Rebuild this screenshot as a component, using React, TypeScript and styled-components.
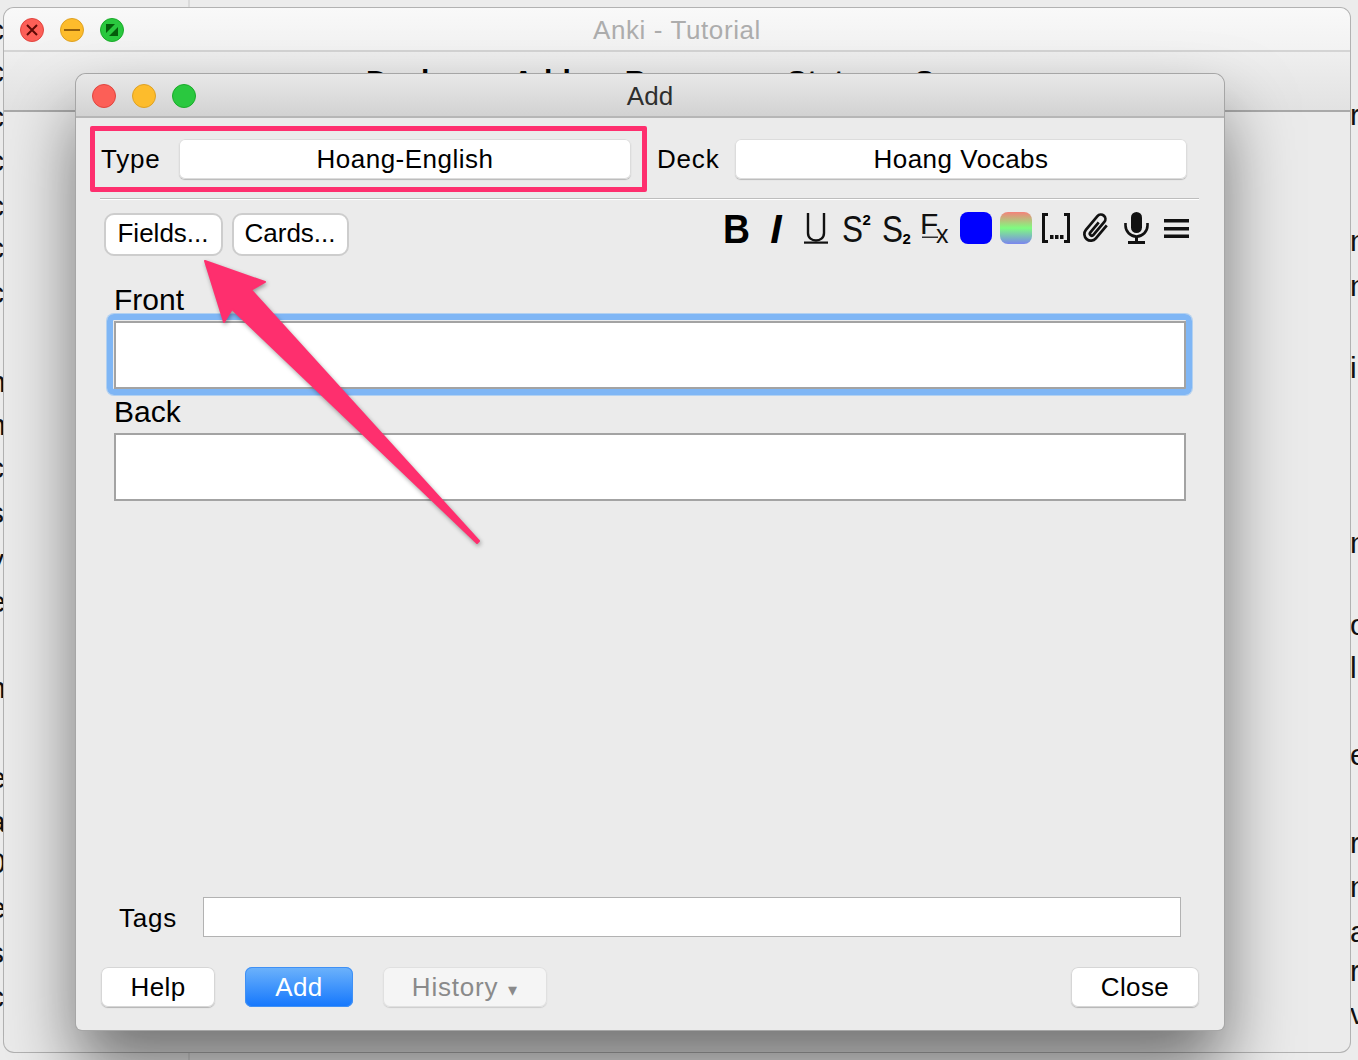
import React from "react";
import styled, { createGlobalStyle } from "styled-components";

const PINK = "#fe2f6e";

const leftLetters: [string, number][] = [
  ["c", 30], ["c", 72], ["c", 117], ["c", 161], ["c", 206], ["c", 248], ["c", 293],
  ["n", 382], ["n", 425], ["c", 468], ["s", 513], ["y", 560], ["e", 602], ["r", 645],
  ["n", 688], ["r", 733], ["e", 778], ["a", 822], ["0", 863], ["e", 908], ["s", 953],
  ["c", 997], ["l", 1043],
];

const rightLetters: [string, number][] = [
  ["r", 115], ["n", 241], ["n", 286], ["i", 368], ["n", 543], ["o", 625], ["l", 668],
  ["e", 755], ["r", 843], ["n", 887], ["a", 932], ["r", 971], ["v", 1014],
];

const menuItems = ["Decks", "Add", "Browse", "Stats", "Sync"];

const App = () => {
  return (
    <Desktop>
      <GlobalStyle />
      <BackSidebar />

      <EdgeStrip $side="left">
        {leftLetters.map(([ch, y]) => (
          <EdgeLetter key={y} $side="left" $y={y}>
            {ch}
          </EdgeLetter>
        ))}
      </EdgeStrip>
      <EdgeStrip $side="right">
        {rightLetters.map(([ch, y]) => (
          <EdgeLetter key={y} $side="right" $y={y}>
            {ch}
          </EdgeLetter>
        ))}
      </EdgeStrip>

      <MainWindow>
        <MainTitleBar>
          <Lights>
            <Light $color="#fc5f57" $edge="#e0443e">
              <svg width="14" height="14" viewBox="0 0 14 14">
                <path d="M2 2l10 10M12 2L2 12" stroke="#5e0a06" strokeWidth="2" />
              </svg>
            </Light>
            <Light $color="#fdbc2c" $edge="#dea123">
              <svg width="16" height="14" viewBox="0 0 16 14">
                <path d="M0 7h16" stroke="#935f0c" strokeWidth="2" />
              </svg>
            </Light>
            <Light $color="#2ac83f" $edge="#1aab29">
              <svg width="14" height="14" viewBox="0 0 14 14">
                <path d="M1 1h9L1 10zM13 13H4l9-9z" fill="#055c0c" />
              </svg>
            </Light>
          </Lights>
          <MainTitle>Anki - Tutorial</MainTitle>
        </MainTitleBar>
        <MenuBar>
          {menuItems.map((item) => (
            <MenuItem key={item}>{item}</MenuItem>
          ))}
        </MenuBar>
      </MainWindow>

      <Dialog>
        <DialogTitleBar>
          <Lights>
            <Light $color="#fc5f57" $edge="#e0443e" />
            <Light $color="#fdbc2c" $edge="#dea123" />
            <Light $color="#2ac83f" $edge="#1aab29" />
          </Lights>
          <DialogTitle>Add</DialogTitle>
        </DialogTitleBar>

        <ChooserRow>
          <ChooserLabel>Type</ChooserLabel>
          <Chooser>Hoang-English</Chooser>
          <ChooserLabel $indent={26}>Deck</ChooserLabel>
          <Chooser>Hoang Vocabs</Chooser>
        </ChooserRow>

        <Divider />

        <EditorBar>
          <SmallButton $width={119}>Fields...</SmallButton>
          <SmallButton $width={117}>Cards...</SmallButton>
          <Toolbar>
            <ToolIcon viewBox="0 0 32 32">
              <BoldGlyph x="3" y="31" fontSize="41" textLength="27" lengthAdjust="spacingAndGlyphs">
                B
              </BoldGlyph>
            </ToolIcon>
            <ToolIcon viewBox="0 0 32 32">
              <BoldGlyph x="16" y="31" textAnchor="middle" fontSize="41" fontStyle="italic">
                I
              </BoldGlyph>
            </ToolIcon>
            <ToolIcon viewBox="0 0 32 32">
              <path d="M8 1v20c0 10 16 10 16 0V1" fill="none" stroke="#111" strokeWidth="2.400" />
              <rect x="4" y="29.500" width="24" height="2.200" fill="#111" />
            </ToolIcon>
            <ToolIcon viewBox="0 0 32 32">
              <ThinGlyph x="2" y="30" fontSize="36" textLength="21" lengthAdjust="spacingAndGlyphs">
                S
              </ThinGlyph>
              <BoldGlyph x="22.500" y="13" fontSize="15">
                2
              </BoldGlyph>
            </ToolIcon>
            <ToolIcon viewBox="0 0 32 32">
              <ThinGlyph x="2" y="30" fontSize="36" textLength="21" lengthAdjust="spacingAndGlyphs">
                S
              </ThinGlyph>
              <BoldGlyph x="22.500" y="32" fontSize="15">
                2
              </BoldGlyph>
            </ToolIcon>
            <ToolIcon viewBox="0 0 32 32">
              <ThinGlyph x="0" y="22" fontSize="30">
                F
              </ThinGlyph>
              <rect x="2" y="24.500" width="16" height="1.500" fill="#333" />
              <ThinGlyph x="16" y="31" fontSize="25">
                x
              </ThinGlyph>
            </ToolIcon>
            <ColorSwatch $fill="#0000ff" />
            <ColorSwatch $fill="linear-gradient(#f4827a, #7ffc80 50%, #7a85ee)" />
            <ToolIcon viewBox="0 0 32 32">
              <path d="M8 2.500H3.500v27H8M24 2.500h4.500v27H24" fill="none" stroke="#111" strokeWidth="3" />
              <path d="M10 23h3.500v4H10zM15 23h3.500v4H15zM20 23h3.500v4H20z" fill="#111" />
            </ToolIcon>
            <ToolIcon viewBox="0 0 32 32">
              <path
                d="M22.500 7v17a6.500 6.500 0 0 1-13 0V6a4.500 4.500 0 0 1 9 0v17a2 2 0 0 1-4 0V10"
                fill="none"
                stroke="#111"
                strokeWidth="2.700"
                transform="rotate(40 16 16)"
              />
            </ToolIcon>
            <ToolIcon viewBox="0 0 32 32">
              <rect x="11" y="0" width="11" height="21" rx="5.500" fill="#111" />
              <path d="M5.500 11v2.500a11 11 0 0 0 22 0V11" fill="none" stroke="#111" strokeWidth="2.600" />
              <path d="M15 24h3v5h7v3H8v-3h7z" fill="#111" />
            </ToolIcon>
            <ToolIcon viewBox="0 0 32 32">
              <path d="M4 7h25v3.500H4zM4 15h25v3.500H4zM4 22.500h25V26H4z" fill="#111" />
            </ToolIcon>
          </Toolbar>
        </EditorBar>

        <Fields>
          <FieldLabel>Front</FieldLabel>
          <FieldInput $focused />
          <FieldLabel>Back</FieldLabel>
          <FieldInput />
        </Fields>

        <TagsRow>
          <TagsLabel>Tags</TagsLabel>
          <TagsInput />
        </TagsRow>

        <Footer>
          <FooterButton $width={114}>Help</FooterButton>
          <PrimaryButton>Add</PrimaryButton>
          <HistoryButton>
            History <Caret>▾</Caret>
          </HistoryButton>
          <CloseButton $width={128}>Close</CloseButton>
        </Footer>
      </Dialog>

      <Callout />
      <ArrowOverlay viewBox="0 0 1358 1060" width="1358" height="1060">
        <path
          d="M205 261 L265 282 L251 290 L479 541 L477 543 L232 309 L224 322 Z"
          fill={PINK}
          stroke={PINK}
          strokeWidth="2"
          strokeLinejoin="round"
        />
      </ArrowOverlay>
    </Desktop>
  );
};

const GlobalStyle = createGlobalStyle`
  html, body {
    margin: 0;
    padding: 0;
    width: 1358px;
    height: 1060px;
    overflow: hidden;
    background: #ececec;
  }

  * {
    box-sizing: border-box;
  }
`;

const Desktop = styled.div`
  position: relative;
  width: 1358px;
  height: 1060px;
  overflow: hidden;
  background: #ececec;
  font-family: "Liberation Sans", Arial, sans-serif;
  color: #000;
`;

const BackSidebar = styled.div`
  width: 190px;
  height: 100%;
  border-right: 2px solid #dadada;
`;

const EdgeStrip = styled.div<{ $side: "left" | "right" }>`
  position: absolute;
  top: 0;
  bottom: 0;
  width: ${({ $side }) => ($side === "left" ? "4px" : "8px")};
  ${({ $side }) => ($side === "left" ? "left: 0;" : "right: 0;")}
  overflow: hidden;
`;

const EdgeLetter = styled.span<{ $side: "left" | "right"; $y: number }>`
  position: absolute;
  top: ${({ $y }) => $y - 22}px;
  left: ${({ $side }) => ($side === "left" ? "-11px" : "0")};
  font-size: 30px;
  line-height: 44px;
  color: #111;
`;

const MainWindow = styled.div`
  position: absolute;
  left: 4px;
  top: 8px;
  width: 1346px;
  height: 1044px;
  border-radius: 10px;
  background: #ebebeb;
  box-shadow: 0 0 0 1px #b2b2b2;
  overflow: hidden;
`;

const MainTitleBar = styled.div`
  display: grid;
  grid-template-columns: 1fr auto 1fr;
  align-items: center;
  height: 44px;
  padding: 2px 16px 0;
  background: linear-gradient(#f9f9f9, #f2f2f2);
  border-bottom: 2px solid #d4d4d4;
`;

const Lights = styled.div`
  display: flex;
  gap: 16px;
`;

const Light = styled.div<{ $color: string; $edge: string }>`
  display: flex;
  align-items: center;
  justify-content: center;
  width: 24px;
  height: 24px;
  border-radius: 50%;
  background: ${({ $color }) => $color};
  border: 1px solid ${({ $edge }) => $edge};
`;

const MainTitle = styled.div`
  font-size: 26px;
  letter-spacing: 0.6px;
  color: #adadad;
`;

const MenuBar = styled.div`
  display: flex;
  gap: 54px;
  height: 60px;
  padding: 12px 0 0 362px;
  background: linear-gradient(#efefef, #e2e2e2);
  border-bottom: 2px solid #a9a9a9;
  overflow: hidden;
`;

const MenuItem = styled.div`
  font-size: 30px;
  font-weight: 700;
  line-height: 34px;

  &:first-child {
    margin-right: 4px;
  }
`;

const Dialog = styled.div`
  position: absolute;
  left: 76px;
  top: 74px;
  width: 1148px;
  height: 956px;
  display: flex;
  flex-direction: column;
  border-radius: 10px 10px 6px 6px;
  background: #ebebeb;
  box-shadow: 0 0 0 1px #a6a6a6, 0 40px 70px rgba(0, 0, 0, 0.52);
`;

const DialogTitleBar = styled.div`
  display: grid;
  grid-template-columns: 1fr auto 1fr;
  align-items: center;
  height: 44px;
  padding: 2px 16px 0;
  border-radius: 10px 10px 0 0;
  background: linear-gradient(#e8e8e8, #d2d2d2);
  border-bottom: 2px solid #b6b6b6;
`;

const DialogTitle = styled.div`
  font-size: 26px;
  color: #2e2e2e;
`;

const ChooserRow = styled.div`
  display: grid;
  grid-template-columns: 78px 452px 104px 452px;
  align-items: center;
  margin-top: 21px;
  padding-left: 25px;
`;

const ChooserLabel = styled.div<{ $indent?: number }>`
  padding-left: ${({ $indent }) => $indent ?? 0}px;
  font-size: 26px;
  letter-spacing: 0.8px;
`;

const Chooser = styled.div`
  height: 40px;
  line-height: 41px;
  text-align: center;
  font-size: 26px;
  letter-spacing: 0.5px;
  background: #fff;
  border-radius: 6px;
  box-shadow: inset 0 0 0 1px #dcdcdc, 0 1px 1px #b8b8b8;
`;

const Divider = styled.div`
  height: 2px;
  margin: 19px 25px 0 24px;
  background: #fff;
  border-top: 1px solid #bdbdbd;
`;

const EditorBar = styled.div`
  display: flex;
  align-items: flex-start;
  gap: 9px;
  margin-top: 12px;
  padding: 0 32px 0 28px;
`;

const SmallButton = styled.div<{ $width: number }>`
  width: ${({ $width }) => $width}px;
  margin-top: 1px;
  height: 43px;
  padding-right: 1px;
  line-height: 37px;
  text-align: center;
  font-size: 26px;
  background: #fff;
  border: 2px solid #cdcdcd;
  border-radius: 10px;
`;

const Toolbar = styled.div`
  display: flex;
  gap: 8px;
  margin-left: auto;
`;

const ToolIcon = styled.svg`
  width: 32px;
  height: 32px;
  overflow: visible;
`;

const BoldGlyph = styled.text`
  font-family: "Liberation Sans", Arial, sans-serif;
  font-weight: 700;
  fill: #000;
`;

const ThinGlyph = styled.text`
  font-family: "Liberation Sans", Arial, sans-serif;
  fill: #111;
`;

const ColorSwatch = styled.div<{ $fill: string }>`
  width: 32px;
  height: 32px;
  border-radius: 8px;
  background: ${({ $fill }) => $fill};
`;

const Fields = styled.div`
  display: flex;
  flex-direction: column;
  margin-top: 27px;
  padding: 0 38px;
`;

const FieldLabel = styled.div`
  height: 34px;
  margin-bottom: 4px;
  line-height: 34px;
  font-size: 30px;
`;

const FieldInput = styled.div<{ $focused?: boolean }>`
  position: relative;
  height: 68px;
  margin-bottom: 6px;
  background: #fff;
  border: 2px solid #a3a3a3;

  ${({ $focused }) =>
    $focused &&
    `
    &::before {
      content: "";
      position: absolute;
      inset: -9px -8px -8px -9px;
      border: 6px solid #7fb6f5;
      border-radius: 7px;
      box-shadow: 0 0 0 1px #b3d1f0;
    }
  `}
`;

const TagsRow = styled.div`
  display: flex;
  align-items: center;
  margin-top: auto;
  padding: 0 43px;
`;

const TagsLabel = styled.div`
  width: 84px;
  padding-top: 2px;
  font-size: 26px;
  letter-spacing: 0.8px;
`;

const TagsInput = styled.div`
  flex: 1;
  height: 40px;
  background: #fff;
  border: 1px solid #b2b2b2;
`;

const Footer = styled.div`
  display: flex;
  gap: 30px;
  margin-top: 30px;
  padding: 0 25px 23px;
`;

const FooterButton = styled.div<{ $width?: number }>`
  width: ${({ $width }) => $width}px;
  height: 40px;
  line-height: 41px;
  text-align: center;
  font-size: 26px;
  letter-spacing: 0.4px;
  background: #fff;
  border-radius: 7px;
  box-shadow: inset 0 0 0 1px #d6d6d6, 0 1px 1px #b4b4b4;
`;

const PrimaryButton = styled(FooterButton)`
  width: 108px;
  color: #fff;
  background: linear-gradient(#6db3fb, #1477fd);
  box-shadow: inset 0 0 0 1px #3f90f5;
`;

const HistoryButton = styled(FooterButton)`
  width: 164px;
  letter-spacing: 0.8px;
  color: #8a8a8a;
  background: #f5f5f5;
  box-shadow: inset 0 0 0 1px #e0e0e0, 0 1px 1px #cdcdcd;
`;

const Caret = styled.span`
  font-size: 18px;
  margin-left: 2px;
`;

const CloseButton = styled(FooterButton)`
  margin-left: auto;
`;

const Callout = styled.div`
  position: absolute;
  left: 90px;
  top: 126px;
  width: 557px;
  height: 66px;
  border: 5px solid ${PINK};
  border-radius: 2px;
`;

const ArrowOverlay = styled.svg`
  position: absolute;
  left: 0;
  top: 0;
  filter: drop-shadow(1px 2px 2px rgba(0, 0, 0, 0.35));
`;

export default App;
